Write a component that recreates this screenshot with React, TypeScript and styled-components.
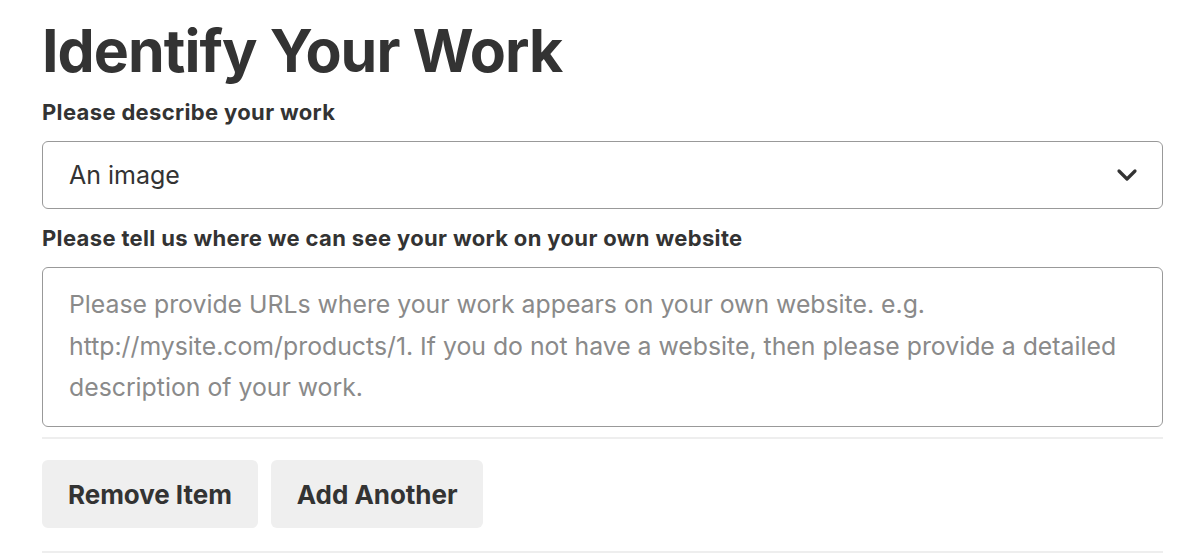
import React from "react";
import styled, { createGlobalStyle } from "styled-components";

const TEXT_COLOR = "#333333";
const BORDER_COLOR = "#999999";
const PLACEHOLDER_COLOR = "#8a8a8a";
const DIVIDER_COLOR = "#eeeeee";
const BUTTON_BG = "#efefef";

const GlobalStyle = createGlobalStyle`
  body {
    margin: 0;
    background: #ffffff;
    font-family: Inter, "Noto Sans", sans-serif;
    color: ${TEXT_COLOR};
  }
`;

const Page = styled.div`
  width: 1121px;
  padding-left: 42px;
`;

const Title = styled.h1`
  margin: 15px 0 0;
  font-size: 59px;
  line-height: 72px;
  font-weight: 700;
  letter-spacing: -0.95px;
`;

const Label = styled.label<{ $top: number }>`
  display: block;
  font-size: 22px;
  line-height: 30px;
  font-weight: 700;
  letter-spacing: 0.35px;
  margin: ${({ $top }) => $top}px 0 14px;
`;

const SelectBox = styled.div`
  box-sizing: border-box;
  height: 68px;
  border: 1.5px solid ${BORDER_COLOR};
  border-radius: 6px;
  display: flex;
  align-items: center;
  justify-content: space-between;
  padding: 0 24px 0 26px;
  font-size: 25px;
`;

const TextArea = styled.div`
  box-sizing: border-box;
  height: 160px;
  border: 1.5px solid ${BORDER_COLOR};
  border-radius: 6px;
  padding: 16px 26px;
  font-size: 24.8px;
  line-height: 41.5px;
  color: ${PLACEHOLDER_COLOR};
`;

const Divider = styled.hr<{ $top: number }>`
  border: none;
  height: 2px;
  background: ${DIVIDER_COLOR};
  margin: ${({ $top }) => $top}px 0 0;
`;

const ButtonRow = styled.div`
  display: flex;
  gap: 13px;
  margin-top: 21px;
`;

const Button = styled.button`
  height: 68px;
  padding: 0 26px;
  border: none;
  border-radius: 6px;
  background: ${BUTTON_BG};
  color: ${TEXT_COLOR};
  font-family: Inter, "Noto Sans", sans-serif;
  font-size: 26px;
  font-weight: 700;
  letter-spacing: -0.05px;
`;

const Chevron = () => (
  <svg width="22" height="14" viewBox="0 0 22 14" fill="none">
    <path
      d="M3 3l8 8 8-8"
      stroke={TEXT_COLOR}
      strokeWidth="3.2"
      strokeLinecap="round"
      strokeLinejoin="round"
    />
  </svg>
);

export default function App() {
  return (
    <Page>
      <GlobalStyle />
      <Title>Identify Your Work</Title>
      <Label $top={10}>Please describe your work</Label>
      <SelectBox>
        <span>An image</span>
        <Chevron />
      </SelectBox>
      <Label $top={14}>
        Please tell us where we can see your work on your own website
      </Label>
      <TextArea>
        Please provide URLs where your work appears on your own website. e.g.
        http://mysite.com/products/1. If you do not have a website, then please
        provide a detailed description of your work.
      </TextArea>
      <Divider $top={10} />
      <ButtonRow>
        <Button>Remove Item</Button>
        <Button>Add Another</Button>
      </ButtonRow>
      <Divider $top={23} />
    </Page>
  );
}
